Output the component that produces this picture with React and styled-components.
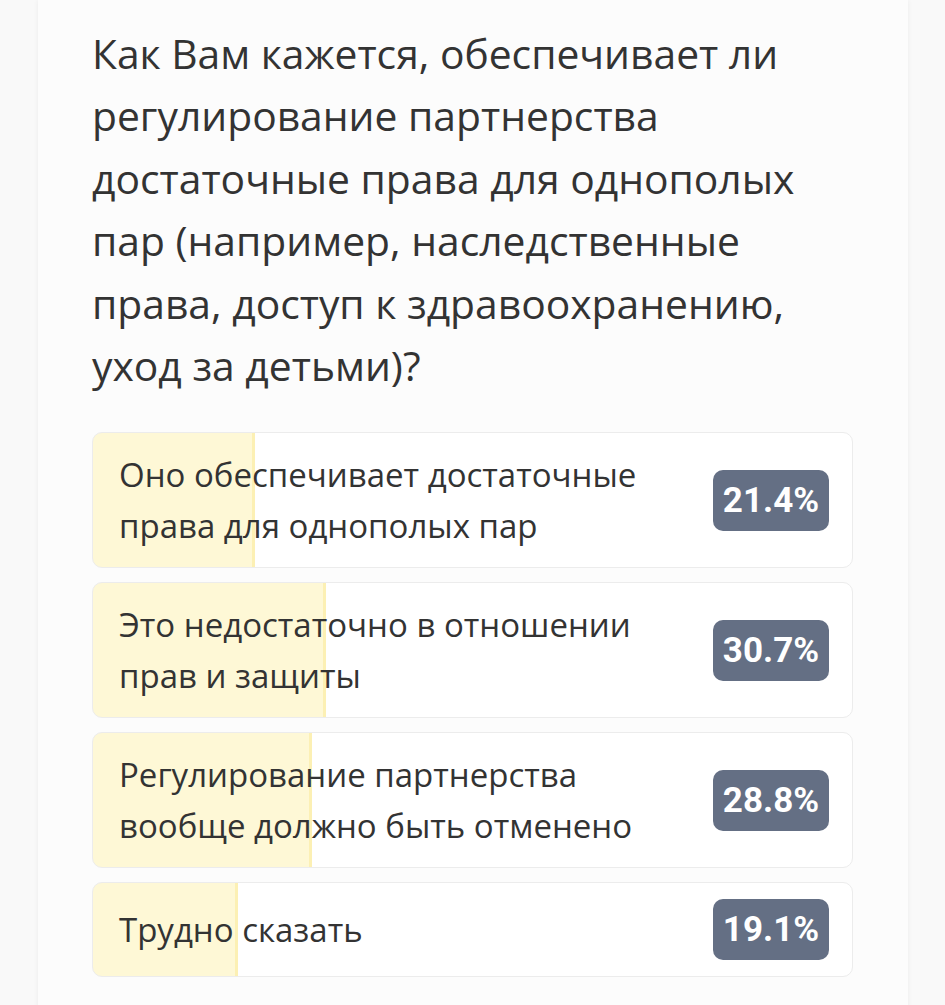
import React from "react";
import styled, { createGlobalStyle } from "styled-components";

const Global = createGlobalStyle`
  html, body { margin: 0; padding: 0; background: #f9f9f9; }
  body { font-family: "Open Sans", "Noto Sans", sans-serif; }
`;

const Page = styled.div`
  padding: 0 37px 0 38px;
  min-height: 1005px;
  box-sizing: border-box;
`;

const Card = styled.div`
  background: #fcfcfc;
  box-shadow: 0 0 5px rgba(0, 0, 0, 0.06);
  padding: 22px 55px 40px 54px;
  min-height: 1005px;
  box-sizing: border-box;
`;

const Question = styled.h1`
  margin: 0 0 36px;
  font-size: 40.8px;
  line-height: 62.4px;
  font-weight: 400;
  color: #333;
  letter-spacing: 0;
`;

const List = styled.div`
  display: flex;
  flex-direction: column;
  gap: 14px;
`;

const Option = styled.div`
  display: flex;
  align-items: center;
  justify-content: space-between;
  gap: 20px;
  border: 1px solid #ececec;
  border-radius: 10px;
  padding: 16px 23px 16px 26px;
  background: linear-gradient(
    to right,
    #fef8d6 0,
    #fef8d6 calc(${(p) => p.$pct}% - 3px),
    #fcf0b4 calc(${(p) => p.$pct}% - 3px),
    #fcf0b4 ${(p) => p.$pct}%,
    #ffffff ${(p) => p.$pct}%
  );
`;

const Label = styled.div`
  font-size: 33px;
  line-height: 51px;
  color: #333;
  flex: 1;
`;

const Badge = styled.div`
  flex: none;
  font-family: "Roboto", sans-serif;
  background: #646f84;
  color: #fff;
  font-weight: 700;
  font-size: 35px;
  height: 61px;
  line-height: 61px;
  padding: 0 8px;
  border-radius: 10px;
  min-width: 100px;
  text-align: center;
`;

const options = [
  { text: "Оно обеспечивает достаточные\nправа для однополых пар", pct: 21.4 },
  { text: "Это недостаточно в отношении\nправ и защиты", pct: 30.7 },
  { text: "Регулирование партнерства\nвообще должно быть отменено", pct: 28.8 },
  { text: "Трудно сказать", pct: 19.1 },
];

export default function App() {
  return (
    <>
      <Global />
      <Page>
        <Card>
          <Question>
            Как Вам кажется, обеспечивает ли
            <br />
            регулирование партнерства
            <br />
            достаточные права для однополых
            <br />
            пар (например, наследственные
            <br />
            права, доступ к здравоохранению,
            <br />
            уход за детьми)?
          </Question>
          <List>
            {options.map((o) => (
              <Option key={o.text} $pct={o.pct}>
                <Label>
                  {o.text.split("\n").map((l, i) => (
                    <div key={i}>{l}</div>
                  ))}
                </Label>
                <Badge>{o.pct.toFixed(1)}%</Badge>
              </Option>
            ))}
          </List>
        </Card>
      </Page>
    </>
  );
}
